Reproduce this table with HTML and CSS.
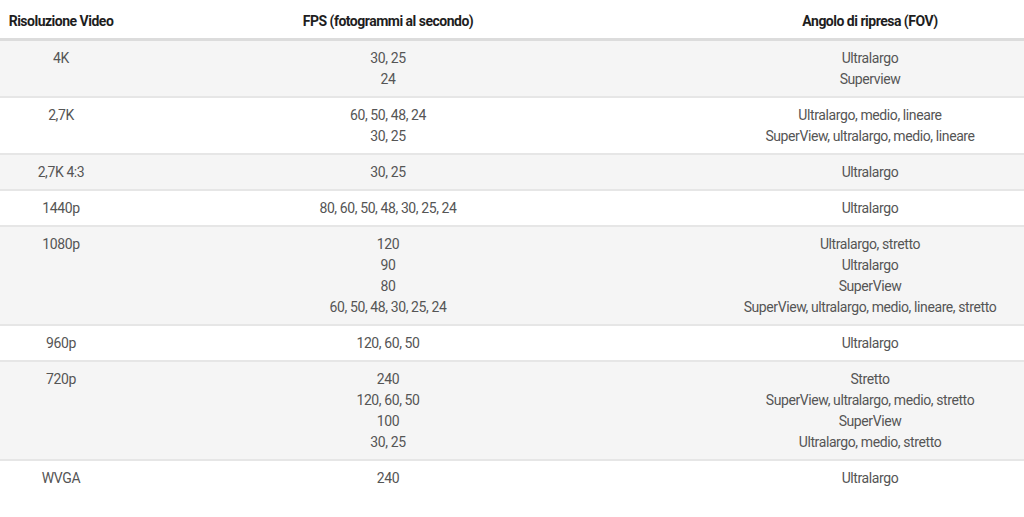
FILE: index.html
```html
<!DOCTYPE html>
<html lang="it">
<head>
<meta charset="utf-8">
<link rel="stylesheet" href="styles.css">
</head>
<body>
<div class="table">
  <div class="row head">
    <div class="cell c1">Risoluzione Video</div>
    <div class="cell c2">FPS (fotogrammi al secondo)</div>
    <div class="cell c3">Angolo di ripresa (FOV)</div>
  </div>
  <div class="row alt">
    <div class="cell c1">4K</div>
    <div class="cell c2">30, 25<br>24</div>
    <div class="cell c3">Ultralargo<br>Superview</div>
  </div>
  <div class="row">
    <div class="cell c1">2,7K</div>
    <div class="cell c2">60, 50, 48, 24<br>30, 25</div>
    <div class="cell c3">Ultralargo, medio, lineare<br>SuperView, ultralargo, medio, lineare</div>
  </div>
  <div class="row alt">
    <div class="cell c1">2,7K 4:3</div>
    <div class="cell c2">30, 25</div>
    <div class="cell c3">Ultralargo</div>
  </div>
  <div class="row">
    <div class="cell c1">1440p</div>
    <div class="cell c2">80, 60, 50, 48, 30, 25, 24</div>
    <div class="cell c3">Ultralargo</div>
  </div>
  <div class="row alt">
    <div class="cell c1">1080p</div>
    <div class="cell c2">120<br>90<br>80<br>60, 50, 48, 30, 25, 24</div>
    <div class="cell c3">Ultralargo, stretto<br>Ultralargo<br>SuperView<br>SuperView, ultralargo, medio, lineare, stretto</div>
  </div>
  <div class="row">
    <div class="cell c1">960p</div>
    <div class="cell c2">120, 60, 50</div>
    <div class="cell c3">Ultralargo</div>
  </div>
  <div class="row alt">
    <div class="cell c1">720p</div>
    <div class="cell c2">240<br>120, 60, 50<br>100<br>30, 25</div>
    <div class="cell c3">Stretto<br>SuperView, ultralargo, medio, stretto<br>SuperView<br>Ultralargo, medio, stretto</div>
  </div>
  <div class="row last">
    <div class="cell c1">WVGA</div>
    <div class="cell c2">240</div>
    <div class="cell c3">Ultralargo</div>
  </div>
</div>
</body>
</html>
```
FILE: styles.css
```css
html, body {
  margin: 0;
  padding: 0;
  background: #ffffff;
  overflow: hidden;
}
body {
  font-family: Roboto, "Liberation Sans", sans-serif;
  font-size: 14px;
  color: #555555;
}
.table {
  width: 1024px;
}
.row {
  display: grid;
  grid-template-columns: 122px 532px 370px;
  border-bottom: 2px solid #e6e6e6;
}
.row.alt {
  background: #f5f5f5;
}
.row.last {
  border-bottom: none;
}
.cell {
  text-align: center;
  line-height: 21px;
  padding: 7px 0 6px;
  letter-spacing: -0.4px;
  white-space: nowrap;
}
.c3 {
  padding-left: 62px;
}
.head {
  height: 38px;
  border-bottom: 3px solid #dcdcdc;
}
.head .cell {
  font-weight: 700;
  color: #1e1e1e;
  letter-spacing: -0.5px;
  padding-top: 11px;
  padding-bottom: 0;
}
```
